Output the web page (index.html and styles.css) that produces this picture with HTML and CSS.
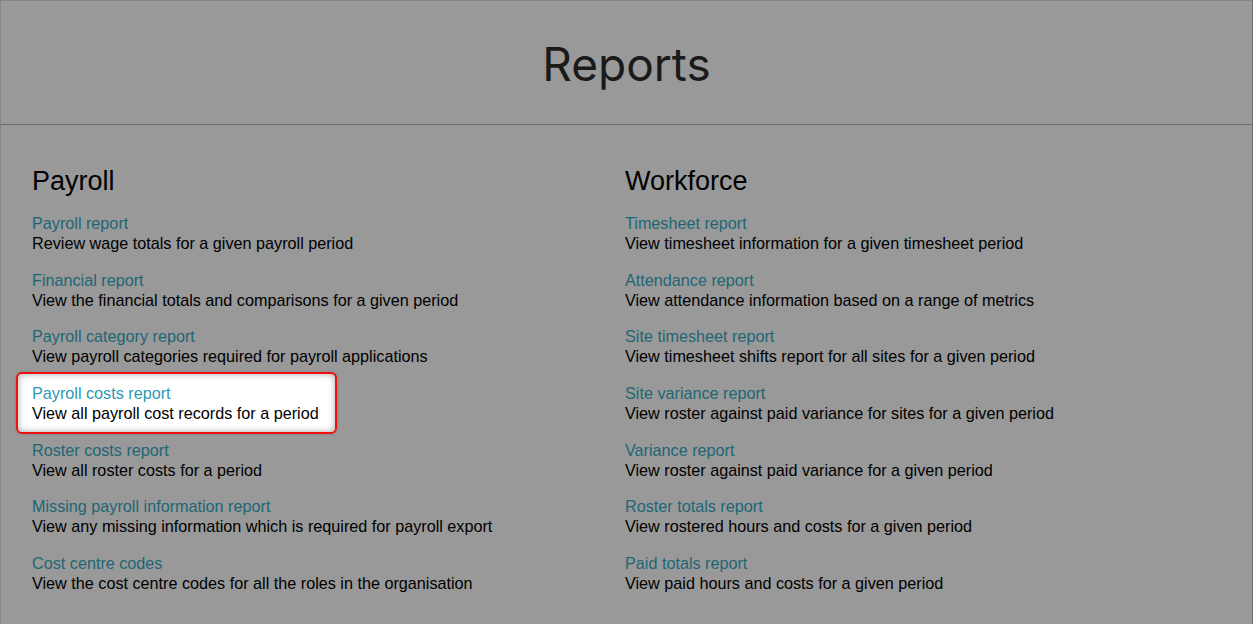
FILE: index.html
```html
<!DOCTYPE html>
<html>
<head>
    <title>Reports</title>
    <link rel="stylesheet" href="styles.css">
</head>
<body>
    <div id="page">
        <div id="page-header">
            <h1>Reports</h1>
        </div>

        <div id="report-columns">
            <div class="report-column">
                <h2>Payroll</h2>
                <div class="report-item">
                    <a href="#">Payroll report</a>
                    <p>Review wage totals for a given payroll period</p>
                </div>
                <div class="report-item">
                    <a href="#">Financial report</a>
                    <p>View the financial totals and comparisons for a given period</p>
                </div>
                <div class="report-item">
                    <a href="#">Payroll category report</a>
                    <p>View payroll categories required for payroll applications</p>
                </div>
                <div class="report-item highlighted">
                    <a href="#">Payroll costs report</a>
                    <p>View all payroll cost records for a period</p>
                </div>
                <div class="report-item">
                    <a href="#">Roster costs report</a>
                    <p>View all roster costs for a period</p>
                </div>
                <div class="report-item">
                    <a href="#">Missing payroll information report</a>
                    <p>View any missing information which is required for payroll export</p>
                </div>
                <div class="report-item">
                    <a href="#">Cost centre codes</a>
                    <p>View the cost centre codes for all the roles in the organisation</p>
                </div>
            </div>

            <div class="report-column">
                <h2>Workforce</h2>
                <div class="report-item">
                    <a href="#">Timesheet report</a>
                    <p>View timesheet information for a given timesheet period</p>
                </div>
                <div class="report-item">
                    <a href="#">Attendance report</a>
                    <p>View attendance information based on a range of metrics</p>
                </div>
                <div class="report-item">
                    <a href="#">Site timesheet report</a>
                    <p>View timesheet shifts report for all sites for a given period</p>
                </div>
                <div class="report-item">
                    <a href="#">Site variance report</a>
                    <p>View roster against paid variance for sites for a given period</p>
                </div>
                <div class="report-item">
                    <a href="#">Variance report</a>
                    <p>View roster against paid variance for a given period</p>
                </div>
                <div class="report-item">
                    <a href="#">Roster totals report</a>
                    <p>View rostered hours and costs for a given period</p>
                </div>
                <div class="report-item">
                    <a href="#">Paid totals report</a>
                    <p>View paid hours and costs for a given period</p>
                </div>
            </div>
        </div>
    </div>
</body>
</html>
```

FILE: styles.css
```css
/* Page frame (dimmed behind the highlight) */
body {
    margin: 0;
    background: #999999;
    font-family: "Liberation Sans", Arial, sans-serif;
    color: #000;
}

#page {
    height: 624px;
    box-sizing: border-box;
    border: 1px solid #858585;
    border-right-color: #6d6d6d;
    border-bottom: none;
}

/* Header */
#page-header {
    height: 123px;
    border-bottom: 1px solid #6a6a6a;
    display: flex;
    align-items: center;
    justify-content: center;
}

#page-header h1 {
    margin: 2px 0 0 0;
    font-family: Inter, "Noto Sans", sans-serif;
    font-weight: 400;
    font-size: 46px;
    color: #1a1a1a;
}

/* Two report columns */
#report-columns {
    display: grid;
    grid-template-columns: 1fr 1fr;
    padding: 0 34px 0 31px;
}

.report-column h2 {
    margin: 41px 0 17px 0;
    font-size: 27px;
    font-weight: 400;
    line-height: 30px;
}

.report-item {
    margin-bottom: 16.7px;
    font-size: 16.2px;
    line-height: 20px;
}

.report-item a {
    display: block;
    color: #1e6675;
    text-decoration: none;
}

.report-item p {
    margin: 0;
}

/* Item picked out above the overlay */
.report-item.highlighted {
    width: fit-content;
    margin: -11px 0 5.7px -16px;
    padding: 9px 16px 9px 14px;
    background: #fff;
    border: 2px solid #f01010;
    border-radius: 6px;
    box-shadow: inset 0 0 7px rgba(0, 0, 0, 0.35), 0 0 3px rgba(0, 0, 0, 0.2);
}

.report-item.highlighted a {
    color: #2a9ab5;
}
```
